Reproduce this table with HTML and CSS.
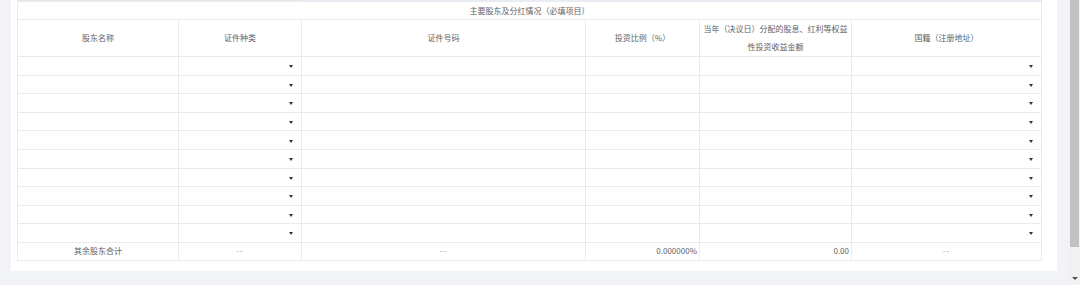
FILE: index.html
```html
<!DOCTYPE html>
<html lang="zh">
<head>
<meta charset="utf-8">
<link rel="stylesheet" href="styles.css">
</head>
<body>
<div class="page">
  <div class="main">
    <div class="card">
      <div class="prev-edge"><span class="edge-a"></span><span class="edge-b"></span></div>
      <table class="grid">
        <colgroup>
          <col class="c1"><col class="c2"><col class="c3"><col class="c4"><col class="c5"><col class="c6">
        </colgroup>
        <thead>
          <tr class="title-row"><th colspan="6">主要股东及分红情况（必填项目）</th></tr>
          <tr class="head-row">
            <th>股东名称</th>
            <th>证件种类</th>
            <th>证件号码</th>
            <th>投资比例（%）</th>
            <th class="two-line">当年（决议日）分配的股息、红利等权益<br>性投资收益金额</th>
            <th>国籍（注册地址）</th>
          </tr>
        </thead>
        <tbody>
          <tr class="data-row"><td></td><td class="sel"><span class="caret"></span></td><td></td><td></td><td></td><td class="sel"><span class="caret"></span></td></tr>
          <tr class="data-row"><td></td><td class="sel"><span class="caret"></span></td><td></td><td></td><td></td><td class="sel"><span class="caret"></span></td></tr>
          <tr class="data-row"><td></td><td class="sel"><span class="caret"></span></td><td></td><td></td><td></td><td class="sel"><span class="caret"></span></td></tr>
          <tr class="data-row"><td></td><td class="sel"><span class="caret"></span></td><td></td><td></td><td></td><td class="sel"><span class="caret"></span></td></tr>
          <tr class="data-row"><td></td><td class="sel"><span class="caret"></span></td><td></td><td></td><td></td><td class="sel"><span class="caret"></span></td></tr>
          <tr class="data-row"><td></td><td class="sel"><span class="caret"></span></td><td></td><td></td><td></td><td class="sel"><span class="caret"></span></td></tr>
          <tr class="data-row"><td></td><td class="sel"><span class="caret"></span></td><td></td><td></td><td></td><td class="sel"><span class="caret"></span></td></tr>
          <tr class="data-row"><td></td><td class="sel"><span class="caret"></span></td><td></td><td></td><td></td><td class="sel"><span class="caret"></span></td></tr>
          <tr class="data-row"><td></td><td class="sel"><span class="caret"></span></td><td></td><td></td><td></td><td class="sel"><span class="caret"></span></td></tr>
          <tr class="data-row"><td></td><td class="sel"><span class="caret"></span></td><td></td><td></td><td></td><td class="sel"><span class="caret"></span></td></tr>
          <tr class="total-row">
            <td class="center">其余股东合计</td>
            <td class="center dash">--</td>
            <td class="center dash">--</td>
            <td class="right">0.000000%</td>
            <td class="right">0.00</td>
            <td class="center dash">--</td>
          </tr>
        </tbody>
      </table>
    </div>
  </div>
  <div class="scrollbar">
    <div class="thumb"></div>
    <div class="track"></div>
    <div class="arrow"><span class="arrow-tri"></span></div>
  </div>
</div>
</body>
</html>
```
FILE: styles.css
```css
html, body {
  margin: 0;
  padding: 0;
}
body {
  background: #f2f3f7;
  font-family: "Noto Sans CJK SC", "Noto Sans", sans-serif;
  color: #606266;
  font-size: 8px;
}
.page {
  display: flex;
  height: 285px;
  overflow: hidden;
}
.main {
  flex: 1;
  padding: 0 12px 0 11px;
}
.card {
  background: #fff;
  padding: 0 15px 10px 6px;
}
.prev-edge {
  display: flex;
  height: 1px;
}
.edge-a {
  width: 284px;
  background: #e6e6e6;
}
.edge-b {
  width: 741px;
  background: #e6edf8;
}
.grid {
  border-collapse: collapse;
  table-layout: fixed;
  width: 1025px;
}
.grid th, .grid td {
  border: 1px solid #ebebeb;
  padding: 0;
  font-weight: normal;
  text-align: center;
  vertical-align: middle;
  line-height: 12px;
}
.c1 { width: 161px; }
.c2 { width: 123px; }
.c3 { width: 284px; }
.c4 { width: 114px; }
.c5 { width: 152px; }
.c6 { width: 190px; }
.title-row th {
  height: 17px;
}
.head-row th {
  height: 36px;
}
.head-row .two-line {
  line-height: 18px;
}
.data-row td {
  height: 17.6px;
}
.grid td.sel {
  text-align: right;
  padding-right: 8px;
}
.caret {
  display: inline-block;
  width: 0;
  height: 0;
  border-left: 2px solid transparent;
  border-right: 2px solid transparent;
  border-top: 3px solid #333;
  vertical-align: middle;
}
.total-row td {
  height: 17px;
}
.grid td.right {
  text-align: right;
  padding-right: 2px;
}
.grid td.dash {
  color: #9a9ca3;
  letter-spacing: 1px;
}
.scrollbar {
  width: 11px;
  display: flex;
  flex-direction: column;
  background: #f1f1f1;
}
.thumb {
  height: 247px;
  background: #c1c1c1;
  margin: 0 1px;
}
.track {
  flex: 1;
}
.arrow {
  height: 14px;
  display: flex;
  justify-content: center;
  align-items: center;
}
.arrow-tri {
  width: 0;
  height: 0;
  border-left: 3px solid transparent;
  border-right: 3px solid transparent;
  border-top: 3px solid #505050;
}
```
